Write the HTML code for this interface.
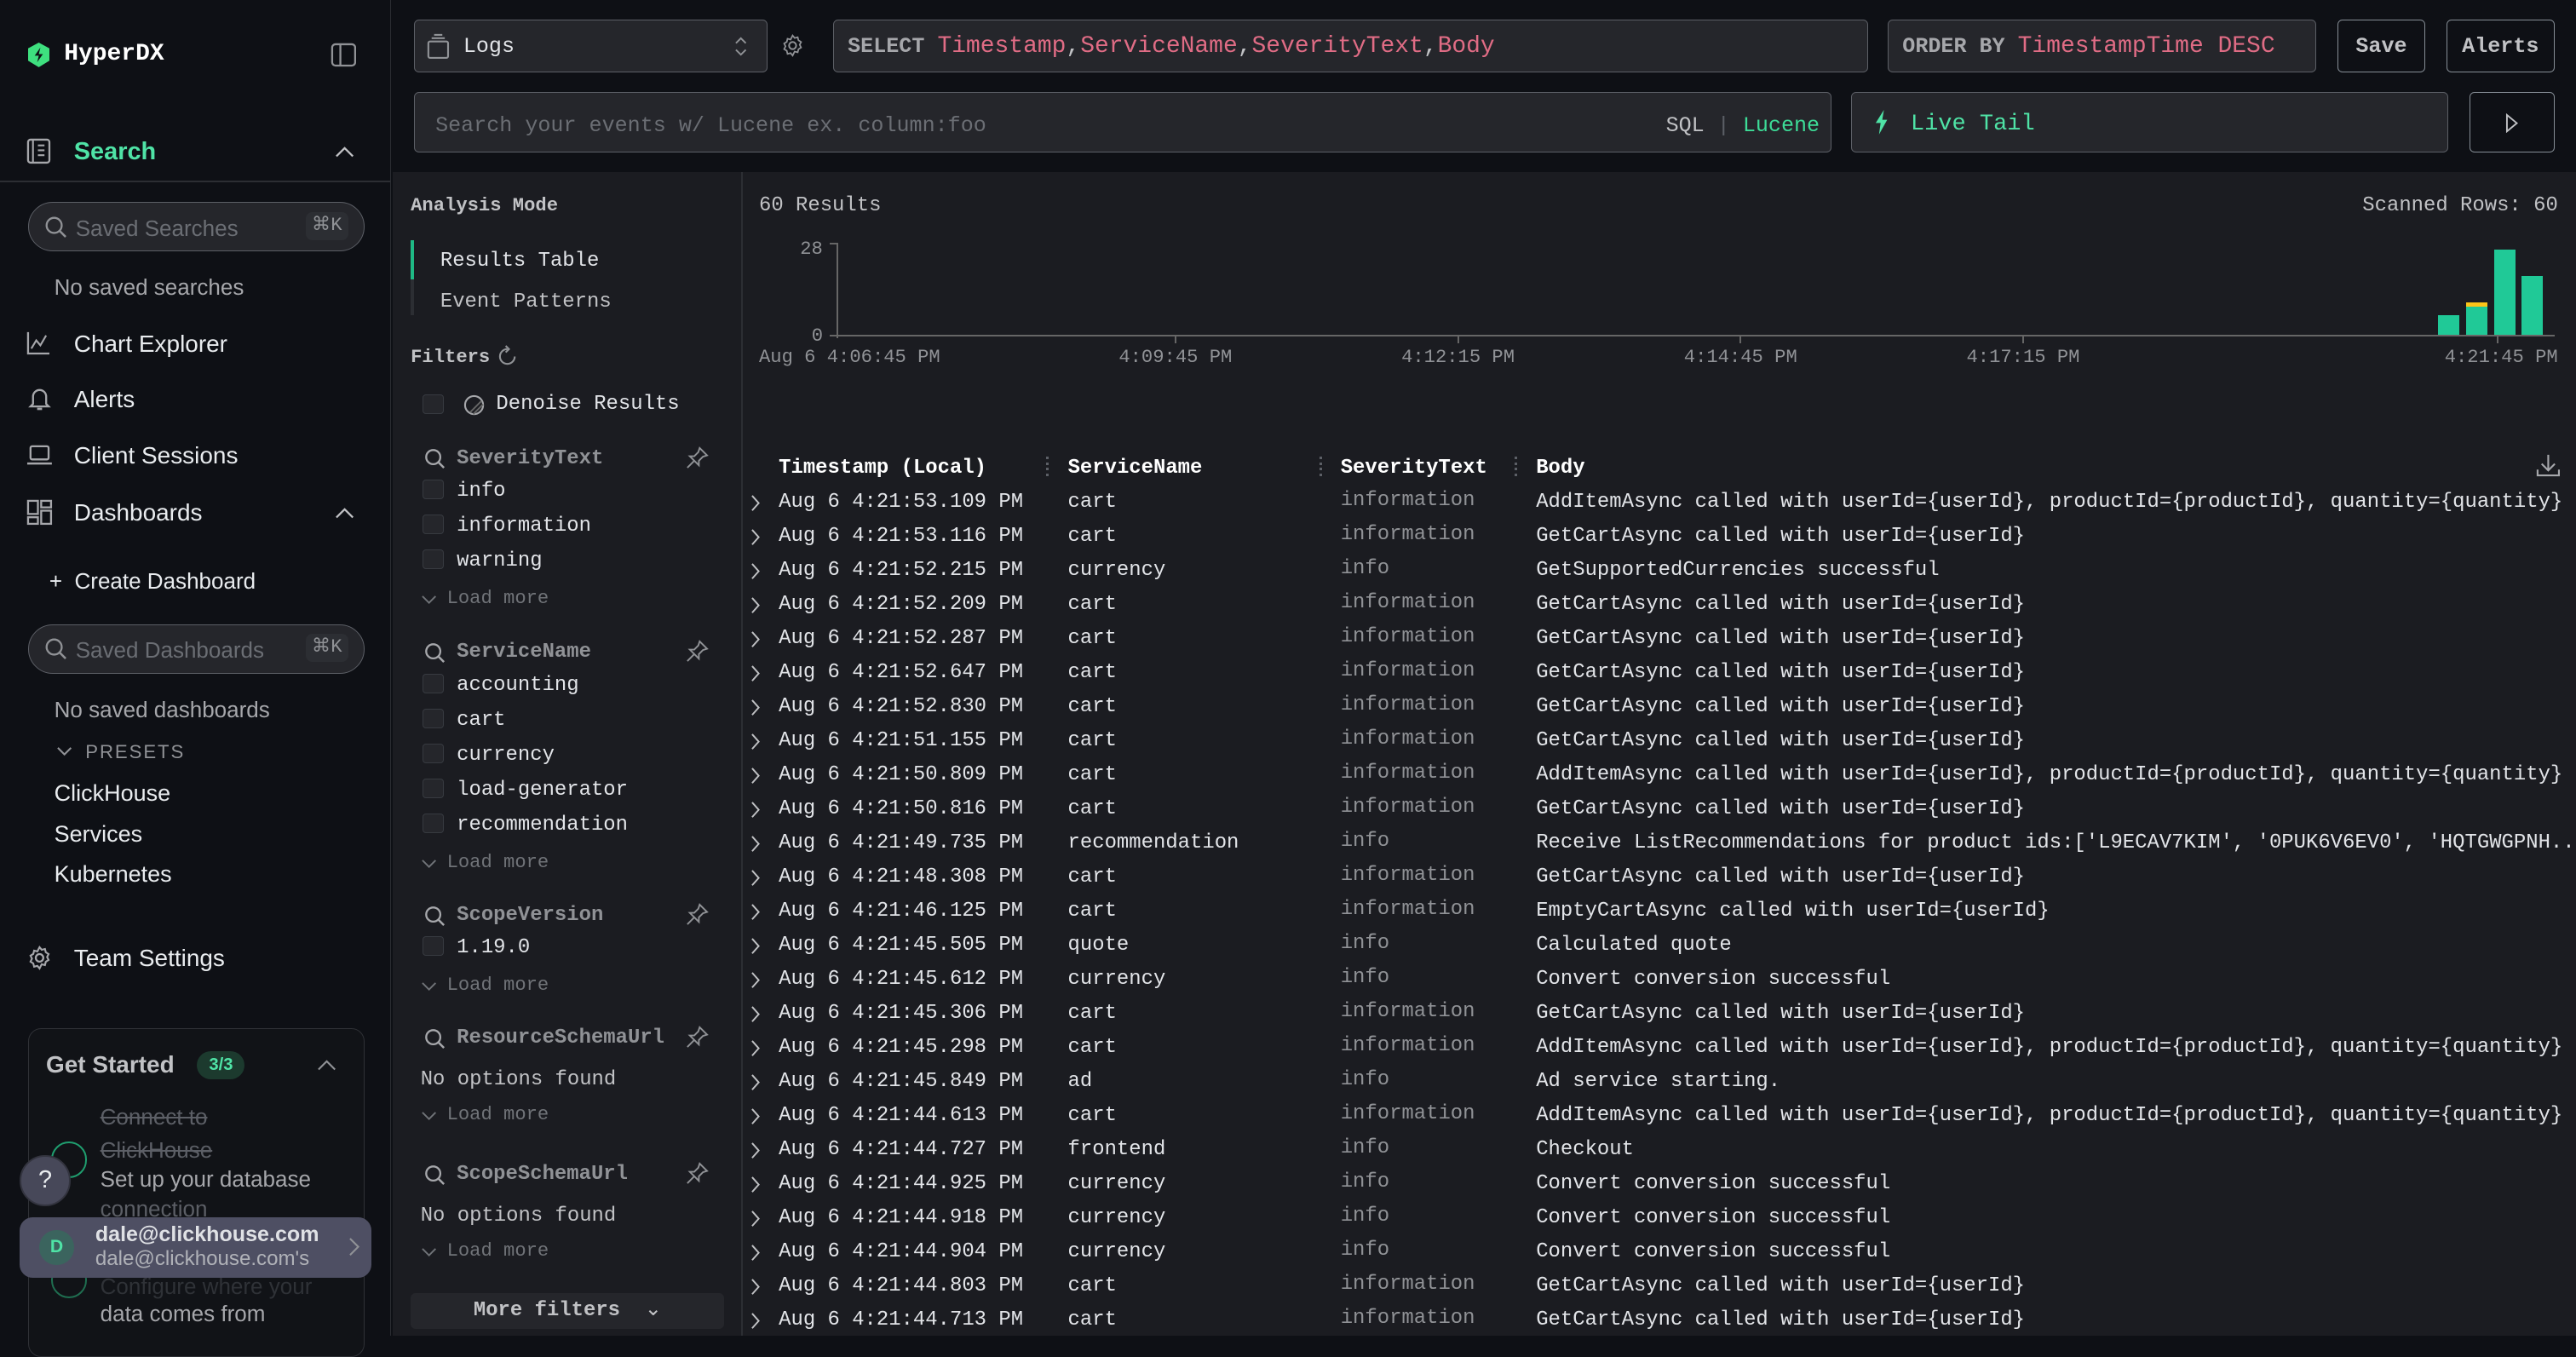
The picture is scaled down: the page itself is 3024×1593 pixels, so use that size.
<!DOCTYPE html>
<html><head><meta charset="utf-8">
<style>
html{zoom:1.92857}
*{box-sizing:border-box;margin:0;padding:0}
body{width:1568px;height:813px;overflow:hidden;background:#0e1015;color:#c1c2c5;font-family:"Liberation Mono",monospace;font-size:12.4px;position:relative}
.a{position:absolute;white-space:nowrap}
.sans{font-family:"Liberation Sans",sans-serif}
.box{position:absolute;background:#25262b;border:1px solid #5c5f66;border-radius:3px}
.nav{font-family:"Liberation Sans",sans-serif;font-size:14.5px;color:#e9ecef}
.g{color:#909296}
svg{position:absolute}
.cb{position:absolute;width:13px;height:12px;border:1px solid #373a40;background:#25262b;border-radius:2px}
.fh{font-weight:bold;color:#909296}
.lm{color:#707378}
.row{position:absolute;left:452px;width:1116px;height:20.75px}
.row span{position:absolute;top:0;white-space:nowrap;color:#e2e4e8}
</style></head><body>
<div class="a" style="left:0;top:0;width:238px;height:813px;background:#0e1015;border-right:1px solid #2a2c31"></div>
<svg style="left:17px;top:26px" width="13" height="15" viewBox="0 0 13 15"><path d="M6.5 0L13 3.5V11L6.5 15L0 11V3.5Z" fill="#3ee07f"/><path d="M7.5 3L4 8h2.5L5.5 12L9 7H6.5Z" fill="#0e1015"/></svg>
<div class="a" style="left:39px;top:25px;font-weight:bold;font-size:14.5px;color:#fff">HyperDX</div>
<svg style="left:201px;top:26px" width="16" height="15" viewBox="0 0 16 15"><rect x="1" y="1" width="14" height="13" rx="2" fill="none" stroke="#909296" stroke-width="1.2"/><line x1="6" y1="1" x2="6" y2="14" stroke="#909296" stroke-width="1.2"/></svg>
<svg style="left:16px;top:84px" width="15" height="16" viewBox="0 0 15 16"><rect x="1" y="1" width="13" height="14" rx="1.5" fill="none" stroke="#a6a7ab" stroke-width="1.2"/><path d="M4 1v14M7 4.5h4M7 7.5h4M7 10.5h4" stroke="#a6a7ab" stroke-width="1.1"/></svg>
<div class="a sans" style="left:45px;top:84px;font-size:15px;font-weight:bold;color:#4fe3a6">Search</div>
<svg style="left:204px;top:88px" width="12" height="8" viewBox="0 0 12 8"><path d="M1 7L6 2L11 7" fill="none" stroke="#c1c2c5" stroke-width="1.2"/></svg>
<div class="a" style="left:0;top:110px;width:238px;height:1px;background:#2c2e33"></div>
<div class="a" style="left:17px;top:123px;width:205px;height:30px;border-radius:15px;background:#25262b;border:1px solid #5c5f66"></div>
<svg style="left:27px;top:131px" width="14" height="14" viewBox="0 0 14 14"><circle cx="6" cy="6" r="4.6" fill="none" stroke="#909296" stroke-width="1.2"/><path d="M9.4 9.4L13 13" stroke="#909296" stroke-width="1.3"/></svg>
<div class="a sans" style="left:46px;top:131px;font-size:13.5px;color:#6b6e74">Saved Searches</div>
<div class="a" style="left:186px;top:129px;width:26px;height:17px;background:#2c2e33;border-radius:4px;font-size:11.5px;color:#909296;text-align:center;line-height:17px">⌘K</div>
<div class="a sans" style="left:33px;top:167px;font-size:13.5px;color:#a6a7ab">No saved searches</div>
<svg style="left:16px;top:201px" width="15" height="15" viewBox="0 0 15 15"><path d="M1 1V14H14" fill="none" stroke="#a6a7ab" stroke-width="1.2"/><path d="M3 11L6 6L8.5 9L12 3" fill="none" stroke="#a6a7ab" stroke-width="1.1"/></svg>
<div class="a nav" style="left:45px;top:201px">Chart Explorer</div>
<svg style="left:17px;top:235px" width="14" height="16" viewBox="0 0 14 16"><path d="M3 11V6.5a4 4 0 018 0V11l1.5 1.5h-11z" fill="none" stroke="#a6a7ab" stroke-width="1.2"/><path d="M5.5 14h3" stroke="#a6a7ab" stroke-width="1.4"/></svg>
<div class="a nav" style="left:45px;top:235px">Alerts</div>
<svg style="left:16px;top:270px" width="16" height="14" viewBox="0 0 16 14"><rect x="2.5" y="1.5" width="11" height="8" rx="1" fill="none" stroke="#a6a7ab" stroke-width="1.2"/><path d="M0.5 12h15" stroke="#a6a7ab" stroke-width="1.3"/></svg>
<div class="a nav" style="left:45px;top:269px">Client Sessions</div>
<svg style="left:16px;top:304px" width="16" height="16" viewBox="0 0 16 16"><rect x="1" y="1" width="6" height="8" fill="none" stroke="#a6a7ab" stroke-width="1.2"/><rect x="1" y="11" width="6" height="4" fill="none" stroke="#a6a7ab" stroke-width="1.2"/><rect x="9" y="1" width="6" height="4" fill="none" stroke="#a6a7ab" stroke-width="1.2"/><rect x="9" y="7" width="6" height="8" fill="none" stroke="#a6a7ab" stroke-width="1.2"/></svg>
<div class="a nav" style="left:45px;top:304px">Dashboards</div>
<svg style="left:204px;top:308px" width="12" height="8" viewBox="0 0 12 8"><path d="M1 7L6 2L11 7" fill="none" stroke="#c1c2c5" stroke-width="1.2"/></svg>
<div class="a sans" style="left:30px;top:346px;font-size:13.5px;color:#e9ecef">+&nbsp; Create Dashboard</div>
<div class="a" style="left:17px;top:380px;width:205px;height:30px;border-radius:15px;background:#25262b;border:1px solid #5c5f66"></div>
<svg style="left:27px;top:388px" width="14" height="14" viewBox="0 0 14 14"><circle cx="6" cy="6" r="4.6" fill="none" stroke="#909296" stroke-width="1.2"/><path d="M9.4 9.4L13 13" stroke="#909296" stroke-width="1.3"/></svg>
<div class="a sans" style="left:46px;top:388px;font-size:13.5px;color:#6b6e74">Saved Dashboards</div>
<div class="a" style="left:186px;top:386px;width:26px;height:17px;background:#2c2e33;border-radius:4px;font-size:11.5px;color:#909296;text-align:center;line-height:17px">⌘K</div>
<div class="a sans" style="left:33px;top:424px;font-size:13.5px;color:#a6a7ab">No saved dashboards</div>
<svg style="left:34px;top:454px" width="10" height="7" viewBox="0 0 10 7"><path d="M1 1L5 5L9 1" fill="none" stroke="#909296" stroke-width="1.1"/></svg>
<div class="a sans" style="left:52px;top:451px;font-size:11.5px;color:#909296;letter-spacing:1px">PRESETS</div>
<div class="a sans" style="left:33px;top:475px;font-size:14px;color:#e9ecef">ClickHouse</div>
<div class="a sans" style="left:33px;top:500px;font-size:14px;color:#e9ecef">Services</div>
<div class="a sans" style="left:33px;top:524px;font-size:14px;color:#e9ecef">Kubernetes</div>
<svg style="left:16px;top:575px" width="16" height="16" viewBox="0 0 16 16"><circle cx="8" cy="8" r="2.3" fill="none" stroke="#a6a7ab" stroke-width="1.2"/><path d="M8 1.5l1.3 1.6 2-.5.5 2 1.7 1.1-.9 1.8.9 1.8-1.7 1.1-.5 2-2-.5L8 14.5l-1.3-1.6-2 .5-.5-2-1.7-1.1.9-1.8-.9-1.8 1.7-1.1.5-2 2 .5z" fill="none" stroke="#a6a7ab" stroke-width="1.1"/></svg>
<div class="a nav" style="left:45px;top:575px">Team Settings</div>
<div class="a" style="left:17px;top:626px;width:205px;height:200px;border:1px solid #2f3136;border-radius:8px;background:#111317"></div>
<div class="a sans" style="left:28px;top:640px;font-size:14.5px;font-weight:bold;color:#c1c2c5">Get Started</div>
<div class="a sans" style="left:120px;top:640px;width:29px;height:17px;border-radius:9px;background:#1c3a2e;color:#4fe3a6;font-size:10.5px;font-weight:bold;text-align:center;line-height:17px">3/3</div>
<svg style="left:193px;top:644px" width="12" height="8" viewBox="0 0 12 8"><path d="M1 7L6 2L11 7" fill="none" stroke="#909296" stroke-width="1.1"/></svg>
<div class="a" style="left:31px;top:695px;width:22px;height:22px;border-radius:50%;border:1.5px solid #1f9e6f"></div>
<div class="a sans" style="left:61px;top:670px;font-size:13.5px;line-height:20px;color:#5c5f66;text-decoration:line-through">Connect to<br>ClickHouse</div>
<div class="a sans" style="left:61px;top:709px;font-size:13.5px;line-height:18px;color:#a6a7ab">Set up your database<br><span style="color:#5c5f66">connection</span></div>
<div class="a" style="left:31px;top:768px;width:22px;height:22px;border-radius:50%;border:1.5px solid #1f6e50"></div>
<div class="a sans" style="left:61px;top:774px;font-size:13.5px;line-height:18px;color:#2f3237">Configure where your</div>
<div class="a sans" style="left:61px;top:792px;font-size:13.5px;color:#a6a7ab">data comes from</div>
<div class="a sans" style="left:12px;top:703px;width:31px;height:31px;border-radius:50%;background:#474859;border:1.5px solid #33343f;color:#e9ecef;font-size:15px;text-align:center;line-height:28px">?</div>
<div class="a" style="left:12px;top:741px;width:214px;height:37px;border-radius:8px;background:#4e4f63"></div>
<div class="a sans" style="left:24px;top:749px;width:21px;height:21px;border-radius:50%;background:#3b645e;color:#4fe3a6;font-size:11px;font-weight:bold;text-align:center;line-height:21px">D</div>
<div class="a sans" style="left:58px;top:744px;font-size:13px;font-weight:bold;color:#dfe1e5">dale@clickhouse.com</div>
<div class="a sans" style="left:58px;top:759px;font-size:12.5px;color:#b0b2b8">dale@clickhouse.com's</div>
<svg style="left:212px;top:753px" width="7" height="12" viewBox="0 0 7 12"><path d="M1 1L6 6L1 11" fill="none" stroke="#909296" stroke-width="1.1"/></svg>

<div class="box" style="left:252px;top:12px;width:215px;height:32px"></div>
<svg style="left:259px;top:20px" width="16" height="16" viewBox="0 0 16 16"><rect x="2" y="5" width="12" height="10" rx="1" fill="none" stroke="#909296" stroke-width="1.1"/><path d="M4 3h8M5.5 1h5" stroke="#909296" stroke-width="1.1"/></svg>
<div class="a" style="left:282px;top:21px;font-size:13px;color:#e2e4e8">Logs</div>
<svg style="left:447px;top:22px" width="8" height="13" viewBox="0 0 8 13"><path d="M1 4.5L4 1.5L7 4.5M1 8.5L4 11.5L7 8.5" fill="none" stroke="#909296" stroke-width="1"/></svg>
<svg style="left:475px;top:20px" width="15" height="15" viewBox="0 0 16 16"><circle cx="8" cy="8" r="2.3" fill="none" stroke="#909296" stroke-width="1.1"/><path d="M8 1.5l1.3 1.6 2-.5.5 2 1.7 1.1-.9 1.8.9 1.8-1.7 1.1-.5 2-2-.5L8 14.5l-1.3-1.6-2 .5-.5-2-1.7-1.1.9-1.8-.9-1.8 1.7-1.1.5-2 2 .5z" fill="none" stroke="#909296" stroke-width="1"/></svg>
<div class="box" style="left:507px;top:12px;width:630px;height:32px"></div>
<div class="a" style="left:516px;top:20px;font-size:13px"><b style="color:#a6a7ab">SELECT</b>&nbsp;<span style="font-size:14.5px"><span style="color:#e06c85">Timestamp</span><span style="color:#c1c2c5">,</span><span style="color:#e06c85">ServiceName</span><span style="color:#c1c2c5">,</span><span style="color:#e06c85">SeverityText</span><span style="color:#c1c2c5">,</span><span style="color:#e06c85">Body</span></span></div>
<div class="box" style="left:1149px;top:12px;width:261px;height:32px"></div>
<div class="a" style="left:1158px;top:20px;font-size:13px"><b style="color:#a6a7ab">ORDER BY</b>&nbsp;<span style="font-size:14.5px;color:#e06c85">TimestampTime DESC</span></div>
<div class="a" style="left:1423px;top:12px;width:53px;height:32px;border:1px solid #868e96;border-radius:3px;text-align:center;line-height:32px;font-weight:bold;color:#c1c2c5;font-size:13px">Save</div>
<div class="a" style="left:1489px;top:12px;width:66px;height:32px;border:1px solid #868e96;border-radius:3px;text-align:center;line-height:32px;font-weight:bold;color:#c1c2c5;font-size:13px">Alerts</div>
<div class="box" style="left:252px;top:56px;width:863px;height:37px"></div>
<div class="a" style="left:265px;top:69px;font-size:13px;color:#6b6e74">Search your events w/ Lucene ex. column:foo</div>
<div class="a" style="left:1014px;top:69px;font-size:13px;color:#c1c2c5">SQL <span style="color:#5c5f66">|</span> <span style="color:#3ddc97">Lucene</span></div>
<div class="box" style="left:1127px;top:56px;width:363px;height:37px"></div>
<svg style="left:1141px;top:67px" width="9" height="15" viewBox="0 0 9 15"><path d="M6 0L1 8h3L3 15L8 6H5Z" fill="#4fe3a6"/></svg>
<div class="a" style="left:1163px;top:68px;font-size:14px;color:#4fe3a6">Live Tail</div>
<div class="a" style="left:1503px;top:56px;width:52px;height:37px;border:1px solid #868e96;border-radius:3px"></div>
<svg style="left:1525px;top:69px" width="8" height="12" viewBox="0 0 8 12"><path d="M1 1L7 6L1 11Z" fill="none" stroke="#c1c2c5" stroke-width="1"/></svg>

<div class="a" style="left:239px;top:105px;width:1329px;height:708px;background:#1b1c21"></div>
<div class="a" style="left:451px;top:105px;width:1px;height:708px;background:#2c2e33"></div>
<div class="a" style="left:250px;top:119px;font-size:11.5px;font-weight:bold;color:#c1c2c5">Analysis Mode</div>
<div class="a" style="left:250px;top:146px;width:2px;height:46px;background:#2c2e33"></div>
<div class="a" style="left:250px;top:146px;width:2px;height:24px;background:#1fb985"></div>
<div class="a" style="left:268px;top:152px;color:#e2e4e8">Results Table</div>
<div class="a" style="left:268px;top:177px;color:#c1c2c5">Event Patterns</div>
<div class="a" style="left:250px;top:211px;font-size:11.5px;font-weight:bold;color:#c1c2c5">Filters</div>
<svg style="left:303px;top:210px" width="12" height="13" viewBox="0 0 12 13"><path d="M6 2.5a4.5 4.5 0 1 0 4.5 4.5" fill="none" stroke="#909296" stroke-width="1.1"/><path d="M5 0.5L7 2.5L5 4.5" fill="none" stroke="#909296" stroke-width="1.1"/></svg>
<div class="cb" style="left:257px;top:240px"></div>
<svg style="left:282px;top:240px" width="13" height="13" viewBox="0 0 13 13"><circle cx="6.5" cy="6.5" r="5.5" fill="none" stroke="#a6a7ab" stroke-width="1.1"/><path d="M4 11L11 4M6 12L12 6" stroke="#666" stroke-width="1"/></svg>
<div class="a" style="left:302px;top:239px;color:#e2e4e8">Denoise Results</div>

<div id="filters"></div>
<div class="a" style="left:250px;top:787px;width:191px;height:22px;background:#25262b;border-radius:3px;text-align:center;line-height:22px;font-weight:bold;color:#c1c2c5">More filters &nbsp;<span style="font-weight:normal">⌄</span></div>

<div class="a" style="left:462px;top:118px;color:#c1c2c5">60 Results</div>
<div class="a" style="left:1438px;top:118px;color:#c1c2c5">Scanned Rows: 60</div>
<div class="a g" style="left:487px;top:145px;font-size:11.5px">28</div>
<div class="a g" style="left:494px;top:198px;font-size:11.5px">0</div>
<div class="a" style="left:509px;top:148px;width:1px;height:58px;background:#666"></div>
<div class="a" style="left:505px;top:148px;width:4px;height:1px;background:#666"></div>
<div class="a" style="left:505px;top:204px;width:1050px;height:1px;background:#666"></div>
<div class="a" style="left:1484px;top:192px;width:13px;height:12px;background:#20c997"></div>
<div class="a" style="left:1501px;top:184px;width:13px;height:20px;background:#20c997;border-top:3px solid #fcc419"></div>
<div class="a" style="left:1518px;top:152px;width:13px;height:52px;background:#20c997"></div>
<div class="a" style="left:1535px;top:168px;width:13px;height:36px;background:#20c997"></div>
<div class="a g" style="left:462px;top:211px;font-size:11.5px">Aug 6 4:06:45 PM</div>
<div class="a g" style="left:681px;top:211px;font-size:11.5px">4:09:45 PM</div>
<div class="a g" style="left:853px;top:211px;font-size:11.5px">4:12:15 PM</div>
<div class="a g" style="left:1025px;top:211px;font-size:11.5px">4:14:45 PM</div>
<div class="a g" style="left:1197px;top:211px;font-size:11.5px">4:17:15 PM</div>
<div class="a g" style="left:1488px;top:211px;font-size:11.5px">4:21:45 PM</div>
<div class="a" style="left:715px;top:204px;width:1px;height:5px;background:#666"></div>
<div class="a" style="left:887px;top:204px;width:1px;height:5px;background:#666"></div>
<div class="a" style="left:1059px;top:204px;width:1px;height:5px;background:#666"></div>
<div class="a" style="left:1231px;top:204px;width:1px;height:5px;background:#666"></div>
<div class="a" style="left:1520px;top:204px;width:1px;height:5px;background:#666"></div>

<div class="a" style="left:474px;top:278px;font-weight:bold;color:#fff">Timestamp (Local)</div>
<div class="a" style="left:650px;top:278px;font-weight:bold;color:#fff">ServiceName</div>
<div class="a" style="left:816px;top:278px;font-weight:bold;color:#fff">SeverityText</div>
<div class="a" style="left:935px;top:278px;font-weight:bold;color:#fff">Body</div>
<div class="a" style="left:637px;top:278px;width:2px;height:12px;border-left:2px dotted #5c5f66"></div>
<div class="a" style="left:803px;top:278px;width:2px;height:12px;border-left:2px dotted #5c5f66"></div>
<div class="a" style="left:922px;top:278px;width:2px;height:12px;border-left:2px dotted #5c5f66"></div>
<svg style="left:1543px;top:276px" width="16" height="15" viewBox="0 0 16 15"><path d="M8 1V10M4 6.5L8 10.5L12 6.5M1.5 10V13.5H14.5V10" fill="none" stroke="#a6a7ab" stroke-width="1.1"/></svg>
<div id="rows"></div>
<script>
var F=[["SeverityText",272,["info","information","warning"]],["ServiceName",390,["accounting","cart","currency","load-generator","recommendation"]],["ScopeVersion",550,["1.19.0"]],["ResourceSchemaUrl",625,null],["ScopeSchemaUrl",708,null]];
var h="";
F.forEach(function(f){var y=f[1];
h+='<svg style="left:258px;top:'+(y+1)+'px" width="13" height="13" viewBox="0 0 13 13"><circle cx="5.5" cy="5.5" r="4.3" fill="none" stroke="#a6a7ab" stroke-width="1.2"/><path d="M8.7 8.7L12 12" stroke="#a6a7ab" stroke-width="1.3"/></svg>';
h+='<div class="a fh" style="left:278px;top:'+y+'px">'+f[0]+'</div>';
h+='<svg style="left:417px;top:'+(y-1)+'px" width="15" height="15" viewBox="0 0 15 15"><path d="M9 1.5L13.5 6L11 6.8L8.5 9.3L8.5 12L3 6.5L5.7 6.5L8.2 4Z M5.5 9.5L1.5 13.5" fill="none" stroke="#909296" stroke-width="1"/></svg>';
var yy=y+21;
if(f[2]){f[2].forEach(function(v){h+='<div class="cb" style="left:257px;top:'+(yy-1)+'px"></div><div class="a" style="left:278px;top:'+(yy-1)+'px;color:#e2e4e8">'+v+'</div>';yy+=21.3;});}
else{h+='<div class="a" style="left:256px;top:'+(yy+4)+'px;color:#c1c2c5">No options found</div>';yy+=25;}
h+='<svg style="left:256px;top:'+(yy+5)+'px" width="10" height="6" viewBox="0 0 10 6"><path d="M1 1L5 5L9 1" fill="none" stroke="#707378" stroke-width="1"/></svg><div class="a lm" style="left:272px;top:'+(yy+1)+'px;font-size:11.5px">Load more</div>';
});
document.getElementById("filters").outerHTML=h;
var R=[["53.109","cart","information","AddItemAsync called with userId={userId}, productId={productId}, quantity={quantity}"],
["53.116","cart","information","GetCartAsync called with userId={userId}"],
["52.215","currency","info","GetSupportedCurrencies successful"],
["52.209","cart","information","GetCartAsync called with userId={userId}"],
["52.287","cart","information","GetCartAsync called with userId={userId}"],
["52.647","cart","information","GetCartAsync called with userId={userId}"],
["52.830","cart","information","GetCartAsync called with userId={userId}"],
["51.155","cart","information","GetCartAsync called with userId={userId}"],
["50.809","cart","information","AddItemAsync called with userId={userId}, productId={productId}, quantity={quantity}"],
["50.816","cart","information","GetCartAsync called with userId={userId}"],
["49.735","recommendation","info","Receive ListRecommendations for product ids:['L9ECAV7KIM', '0PUK6V6EV0', 'HQTGWGPNH..."],
["48.308","cart","information","GetCartAsync called with userId={userId}"],
["46.125","cart","information","EmptyCartAsync called with userId={userId}"],
["45.505","quote","info","Calculated quote"],
["45.612","currency","info","Convert conversion successful"],
["45.306","cart","information","GetCartAsync called with userId={userId}"],
["45.298","cart","information","AddItemAsync called with userId={userId}, productId={productId}, quantity={quantity}"],
["45.849","ad","info","Ad service starting."],
["44.613","cart","information","AddItemAsync called with userId={userId}, productId={productId}, quantity={quantity}"],
["44.727","frontend","info","Checkout"],
["44.925","currency","info","Convert conversion successful"],
["44.918","currency","info","Convert conversion successful"],
["44.904","currency","info","Convert conversion successful"],
["44.803","cart","information","GetCartAsync called with userId={userId}"],
["44.713","cart","information","GetCartAsync called with userId={userId}"]];
var r="";
R.forEach(function(d,i){var y=298.5+i*20.75;
r+='<div class="row" style="top:'+y+'px"><svg style="left:5px;top:2px" width="6" height="11" viewBox="0 0 6 11"><path d="M1 1L5 5.5L1 10" fill="none" stroke="#c1c2c5" stroke-width="1"/></svg><span style="left:22px">Aug 6 4:21:'+d[0]+' PM</span><span style="left:198px">'+d[1]+'</span><span style="left:364px;top:-1px;color:#909296">'+d[2]+'</span><span style="left:483px;width:633px;overflow:hidden">'+d[3]+'</span></div>';});
document.getElementById("rows").outerHTML=r;
</script>
</body></html>
